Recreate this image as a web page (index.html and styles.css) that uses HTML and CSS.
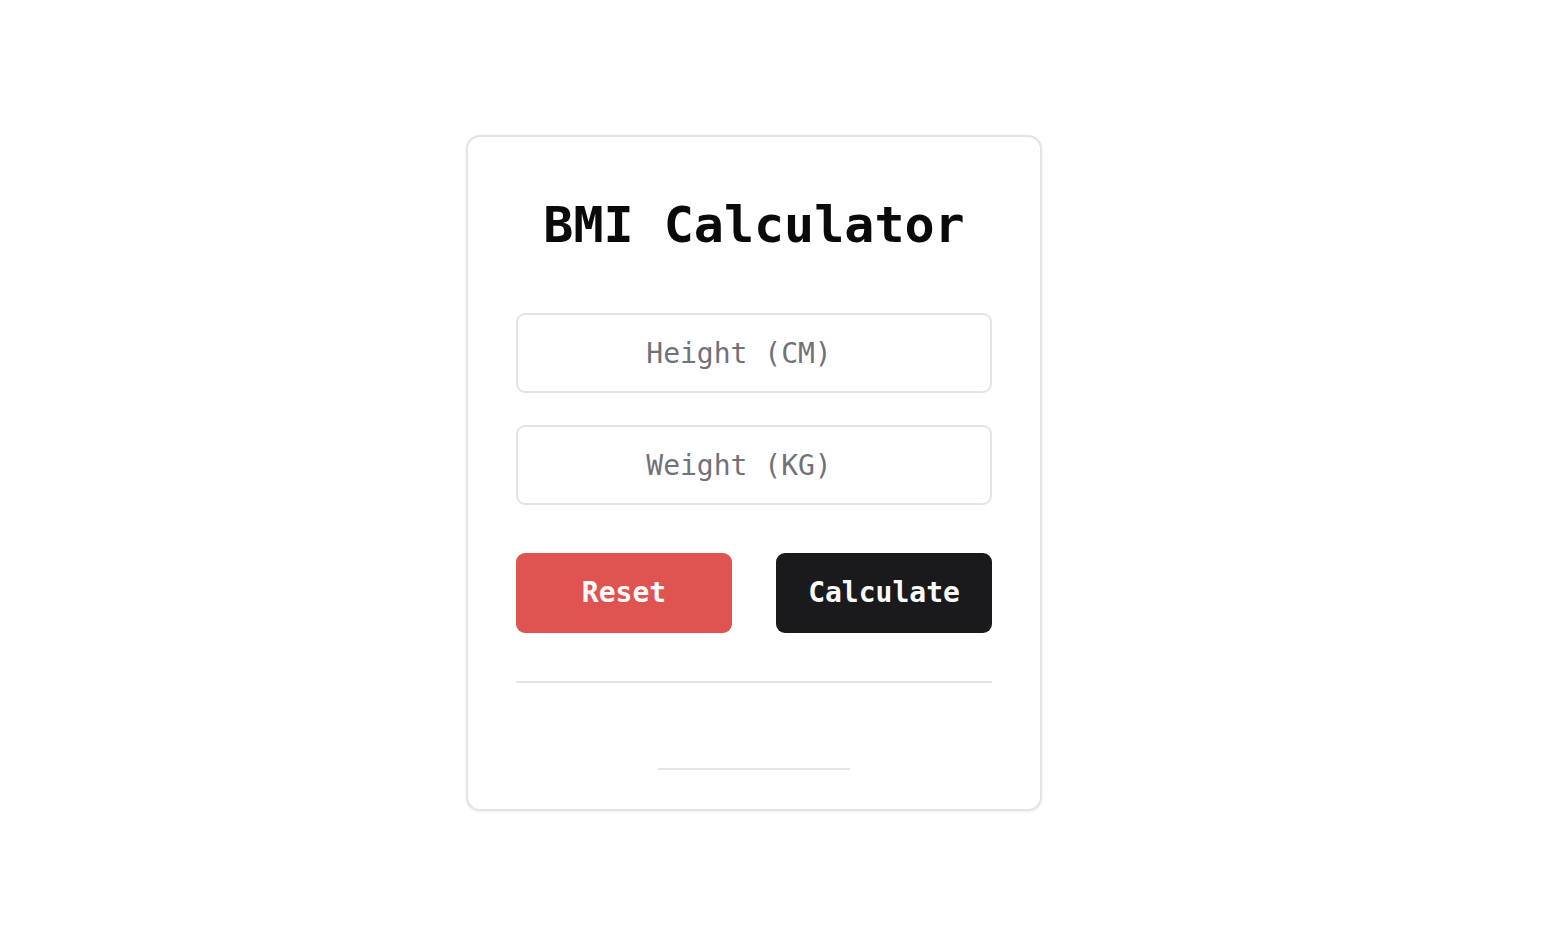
FILE: index.html
```html
<!DOCTYPE html>
<html lang="en">
<head>
<meta charset="utf-8">
<title>BMI Calculator</title>
<link rel="stylesheet" href="styles.css">
</head>
<body>
<main class="page">
  <section class="card">
    <h1 class="title">BMI Calculator</h1>
    <div class="fields">
      <input class="field" type="text" placeholder="Height (CM)">
      <input class="field" type="text" placeholder="Weight (KG)">
    </div>
    <div class="actions">
      <button class="btn btn-reset" type="button">Reset</button>
      <button class="btn btn-calc" type="button">Calculate</button>
    </div>
    <hr class="divider">
    <div class="result">
      <div class="result-line"></div>
    </div>
  </section>
</main>
</body>
</html>
```
FILE: styles.css
```css
* { box-sizing: border-box; }
html, body { margin: 0; padding: 0; background: #ffffff; }
body {
  font-family: "DejaVu Sans Mono", "Liberation Mono", monospace;
  color: #0a0a0a;
}
.page {
  min-height: 950px;
  display: flex;
  align-items: center;
  justify-content: center;
  padding: 0 54px 4px 0;
}
.card {
  width: 576px;
  border: 2px solid #e4e4e7;
  border-radius: 14px;
  background: #fff;
  box-shadow: 0 1px 3px rgba(0,0,0,0.08);
  padding: 48px 48px 39px;
  display: flex;
  flex-direction: column;
}
.title {
  margin: 0 0 48px;
  font-size: 50px;
  line-height: 80px;
  font-weight: 700;
  text-align: center;
  color: #0a0a0a;
}
.fields {
  display: flex;
  flex-direction: column;
  gap: 32px;
}
.field {
  height: 80px;
  width: 100%;
  border: 2px solid #e4e4e7;
  border-radius: 9px;
  padding: 0 47px 0 17px;
  font-family: inherit;
  font-size: 28px;
  text-align: center;
  color: #0a0a0a;
  outline: none;
  background: #fff;
}
.field::placeholder { color: #71717a; }
.actions {
  margin-top: 48px;
  display: flex;
  justify-content: space-between;
}
.btn {
  width: 216px;
  height: 80px;
  border: none;
  border-radius: 9px;
  padding: 0 0 2px;
  font-family: inherit;
  font-size: 28px;
  font-weight: 700;
  color: #fafafa;
  cursor: pointer;
}
.btn-reset { background: #df5350; }
.btn-calc { background: #1a1a1c; }
.divider {
  margin: 48px 0 0;
  border: none;
  height: 2px;
  background: #e4e4e7;
}
.result {
  padding-top: 85px;
  display: flex;
  justify-content: center;
}
.result-line {
  width: 192px;
  height: 2px;
  background: #e4e4e7;
}
```
